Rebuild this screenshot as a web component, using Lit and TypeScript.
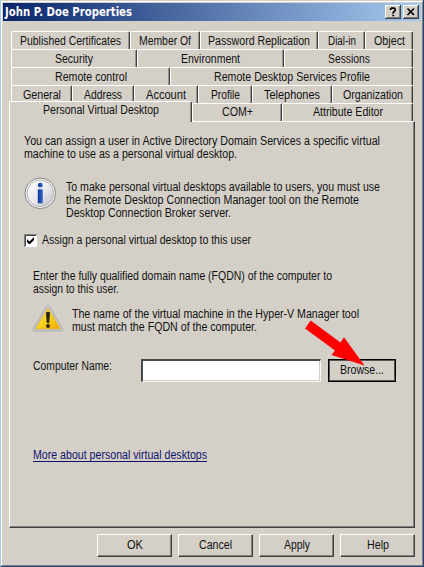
import { LitElement, html, css, svg } from "lit";
import { customElement, property } from "lit/decorators.js";

/** One line of text, condensed horizontally to the dialog font's width. */
@customElement("fit-text")
class FitText extends LitElement {
  @property({ type: Number }) w = 0;
  @property() text = "";
  static styles = css`
    :host { display: inline-block; white-space: nowrap; text-align: left; flex: none; height: 13px; line-height: 13px; }
    .t { display: inline-block; transform-origin: 0 50%; }
  `;
  render() {
    return html`<span class="t">${this.text}</span>`;
  }
  updated() {
    const t = this.renderRoot.querySelector(".t") as HTMLElement;
    t.style.transform = "none";
    const real = t.getBoundingClientRect().width;
    this.style.width = this.w + "px";
    if (real) t.style.transform = `scaleX(${this.w / real})`;
  }
}

type Tab = [string, number, number];
const rows: Tab[][] = [
  [["Published Certificates", 119, 101], ["Member Of", 70, 52], ["Password Replication", 118, 102], ["Dial-in", 47, 28], ["Object", 48, 31]],
  [["Security", 126, 38], ["Environment", 147, 59], ["Sessions", 129, 42]],
  [["Remote control", 159, 72], ["Remote Desktop Services Profile", 243, 156]],
  [["General", 61, 38], ["Address", 62, 38], ["Account", 64, 40], ["Profile", 54, 29], ["Telephones", 80, 56], ["Organization", 81, 60]],
  [["Personal Virtual Desktop", 183, 116], ["COM+", 90, 31], ["Attribute Editor", 131, 70]],
];

const line = (text: string, w: number) => html`<fit-text .text=${text} .w=${w}></fit-text>`;

@customElement("app-root")
class AppRoot extends LitElement {
  static styles = css`
    :host { display: block; font: 12px/13px "Liberation Sans", Arial, sans-serif; color: #111; }
    * { box-sizing: border-box; }
    .window {
      position: relative; width: 424px; height: 567px; overflow: hidden; background: #d4d0c8;
      border-left: 1px solid #a9cbe8; border-right: 1px solid #24426f; border-bottom: 1px solid #24426f;
      padding: 3px 2px 0;
    }
    .window::before {
      content: ""; position: absolute; inset: 1px 0 0 0; pointer-events: none;
      border: 1px solid #fff; border-right-color: #808080; border-bottom-color: #808080;
    }
    .title {
      height: 18px; display: flex; align-items: center; padding: 0 2px; gap: 2px;
      background: linear-gradient(90deg, #0a246a, #a6caf0); color: #fff;
      font: bold 11.5px/13px "DejaVu Sans", sans-serif;
    }
    .title .grow { flex: 1; }
    .cap { width: 16px; height: 14px; display: block; }
    .tabs { padding: 10px 0 0 8px; width: 412px; }
    .row { display: flex; height: 18px; }
    .tab {
      height: 18px; display: flex; justify-content: center; padding-top: 3px;
      border-top: 1px solid #fff; border-left: 1px solid #fff; border-right: 1px solid #404040;
      box-shadow: inset -1px 0 #96938d; border-radius: 2px 2px 0 0;
    }
    .tab:not(.active) { padding-top: 3px; }
    .row:last-child .tab:not(.active) { padding-top: 2px; }
    .active { position: relative; margin: -2px 0 0 -2px; height: 21px; padding-top: 2px; background: #d4d0c8; z-index: 1; }
    .panel {
      margin: 0 0 0 6px; width: 406px; height: 407px; padding: 13px 0 0 14px;
      border: 1px solid #fff; border-right-color: #404040; border-bottom-color: #404040;
      box-shadow: inset -1px -1px #808080;
      display: flex; flex-direction: column; align-items: flex-start;
    }
    .para { display: flex; flex-direction: column; align-items: flex-start; }
    .info { display: flex; margin-top: 16px; gap: 9px; }
    .info .para { padding-top: 4px; }
    .check { display: flex; margin-top: 13px; gap: 5px; align-items: center; height: 14px; }
    .fqdn { margin: 23px 0 0 9px; }
    .warn { display: flex; margin: 6px 0 0 8px; gap: 8px; }
    .warn .para { padding-top: 6px; }
    .warn svg { margin-top: 2px; }
    .name { display: flex; margin: 25px 0 0 9px; align-items: flex-start; }
    .label { width: 108px; height: 23px; display: flex; align-items: flex-start; padding-top: 1px; }
    .input {
      width: 180px; height: 23px; background: #fff; border: 2px solid #484848;
      border-right: 1px solid #f8f7f4; border-bottom: 1px solid #f8f7f4;
      box-shadow: inset -1px -1px #d4d0c8;
    }
    .btn {
      width: 75px; height: 23px; display: flex; align-items: center; justify-content: center;
      border: 1px solid #fff; border-right-color: #404040; border-bottom-color: #404040;
      box-shadow: inset -1px -1px #808080;
    }
    .browse { width: 68px; height: 23px; margin-left: 7px; border: 1px solid #000; box-shadow: inset -1px -1px #555, inset 1px 1px #555; }
    .link { margin: 67px 0 0 9px; color: #10106c; border-bottom: 1px solid #10106c; height: 13px; }
    .buttons { display: flex; gap: 6px; justify-content: flex-end; padding: 6px 6px 0 0; }
    .arrow { position: absolute; left: 299px; top: 314px; width: 68px; height: 56px; }
    svg { display: block; flex: none; }
  `;

  render() {
    return html`
      <div class="window">
        <div class="title">
          ${line("John P. Doe Properties", 127)}<span class="grow"></span>
          ${this.cap(svg`<path d="M5.500 5V4.300L6.500 3.200h2.600l1 1v1.500l-1.900 1.600v1.500" fill="none" stroke="#000" stroke-width="1.7"/><path d="M7.300 9.800h1.900v1.500h-1.900z"/>`)}
          ${this.cap(svg`<path d="M4.5 3.500l6.500 6.500M11 3.500l-6.500 6.500" stroke="#000" stroke-width="1.7"/>`)}
        </div>
        <div class="tabs">
          ${rows.map((r, i) => html`<div class="row">${r.map(([t, w, tw], j) => html`
            <div class="tab ${i === 4 && j === 0 ? "active" : ""}" style="width:${w}px">${line(t, tw)}</div>`)}</div>`)}
        </div>
        <div class="panel">
          <div class="para">
            ${line("You can assign a user in Active Directory Domain Services a specific virtual", 356)}
            ${line("machine to use as a personal virtual desktop.", 213)}
          </div>
          <div class="info">
            <svg width="33" height="33" viewBox="0 0 33 33">
              <defs>
                <linearGradient id="g" x1="0" y1="0" x2="1" y2="1"><stop offset="0" stop-color="#fff"/><stop offset=".55" stop-color="#e9e9ec"/><stop offset="1" stop-color="#b9bcc2"/></linearGradient>
                <linearGradient id="b" x1="0" y1="0" x2="1" y2="0"><stop offset="0" stop-color="#143796"/><stop offset="1" stop-color="#2f68d0"/></linearGradient>
              </defs>
              <circle cx="16.3" cy="16.3" r="15.3" fill="#f4f4f4" stroke="#858585"/>
              <circle cx="16.3" cy="16.3" r="13.2" fill="url(#g)" stroke="#b1b1b1"/>
              <circle cx="16.3" cy="8.2" r="2.4" fill="url(#b)"/>
              <path d="M13.800 12.300h5v14h-5z" fill="url(#b)"/>
            </svg>
            <div class="para">
              ${line("To make personal virtual desktops available to users, you must use", 314)}
              ${line("the Remote Desktop Connection Manager tool on the Remote", 293)}
              ${line("Desktop Connection Broker server.", 165)}
            </div>
          </div>
          <div class="check">
            <svg width="13" height="13" viewBox="0 0 13 13">
              <path d="M0 0h13v13H0z" fill="#fff"/><path d="M0 13V0h13v1H1v12z" fill="#808080"/><path d="M1 12V1h11v1H2v10z" fill="#404040"/>
              <path d="M3 5v3l2 2h1l4-4V3L5.5 7.5z"/>
            </svg>
            ${line("Assign a personal virtual desktop to this user", 209)}
          </div>
          <div class="para fqdn">
            ${line("Enter the fully qualified domain name (FQDN) of the computer to", 299)}
            ${line("assign to this user.", 86)}
          </div>
          <div class="warn">
            <svg width="32" height="30" viewBox="0 0 32 30">
              <defs><linearGradient id="y" x1="0" y1="0" x2="1" y2="1"><stop offset="0" stop-color="#ffe96a"/><stop offset=".5" stop-color="#fbd31c"/><stop offset="1" stop-color="#f0a800"/></linearGradient></defs>
              <path d="M14.4 2.500q1.600-2.600 3.200 0L30.700 25q.8 2-1.400 2H2.700Q.500 27 1.300 25z" fill="#c6c8cb" stroke="#a2a4a6" stroke-width=".8"/>
              <path d="M16 4.300L28.300 24.800H3.700z" fill="url(#y)" stroke="#e2ac00" stroke-width=".6"/>
              <path d="M13.900 8.800q2.100-2 4.200 0L17.200 19h-2.400z" fill="#26251c"/><circle cx="16" cy="22" r="1.900" fill="#26251c"/>
            </svg>
            <div class="para">
              ${line("The name of the virtual machine in the Hyper-V Manager tool", 287)}
              ${line("must match the FQDN of the computer.", 185)}
            </div>
          </div>
          <div class="name">
            <div class="label">${line("Computer Name:", 79)}</div>
            <div class="input"></div>
            <div class="btn browse">${line("Browse...", 44)}</div>
          </div>
          <div class="link">${line("More about personal virtual desktops", 174)}</div>
        </div>
        <div class="buttons">
          <div class="btn">${line("OK", 16)}</div>
          <div class="btn">${line("Cancel", 33)}</div>
          <div class="btn">${line("Apply", 26)}</div>
          <div class="btn">${line("Help", 22)}</div>
        </div>
        <svg class="arrow" viewBox="300 314 68 56"><path d="M310.700 320.500L340.500 342.500L344 337.300L364.500 365.500L331.500 355L335 350.500L305 328.500z" fill="#fe0000"/></svg>
      </div>`;
  }

  private cap(glyph: unknown) {
    return html`<svg class="cap" viewBox="0 0 16 14">
      <path d="M0 0h16v14H0z" fill="#404040"/><path d="M0 0h15v13H0z" fill="#fff"/><path d="M1 1h14v12H1z" fill="#808080"/><path d="M1 1h13v11H1z" fill="#d4d0c8"/>${glyph}
    </svg>`;
  }
}
